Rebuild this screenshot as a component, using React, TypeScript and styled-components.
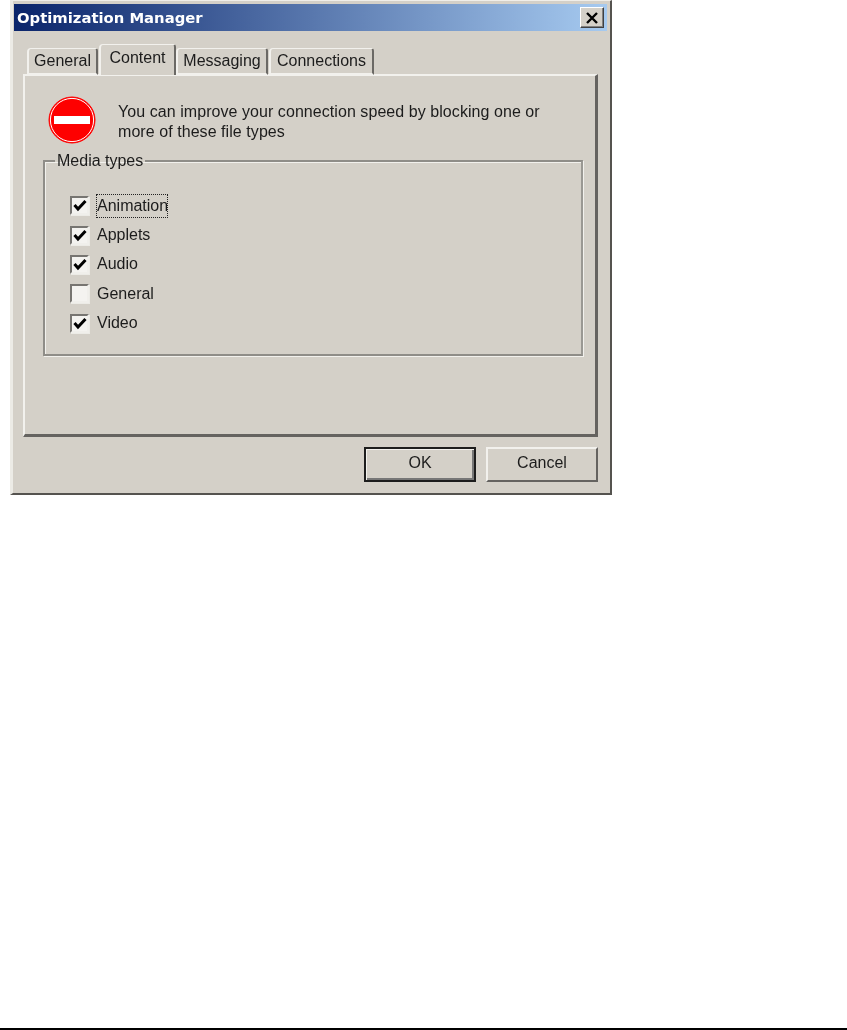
import React from "react";
import styled, { createGlobalStyle } from "styled-components";

const Global = createGlobalStyle`
  html, body { margin: 0; padding: 0; background: #fff; }
  #root { height: 1030px; }
`;

const Page = styled.div`
  height: 1030px;
  display: flex;
  flex-direction: column;
  justify-content: space-between;
  align-items: flex-start;
  overflow: hidden;
`;

const Win = styled.div`
  box-sizing: border-box;
  width: 602px;
  height: 495px;
  margin-left: 10px;
  padding: 3px 3px 5px 1px;
  background: #d4d0c8;
  border-top: 1px solid #f0eee9;
  border-left: 3px solid #ecebe6;
  border-right: 2px solid #55534f;
  border-bottom: 2px solid #55534f;
  display: flex;
  flex-direction: column;
  font-family: "Liberation Sans", Arial, sans-serif;
  font-size: 16px;
  color: #1c1c1c;
  filter: blur(0.45px);
`;

const TitleBar = styled.div`
  height: 27px;
  flex: none;
  display: flex;
  align-items: center;
  justify-content: space-between;
  padding: 0 3px 0 3px;
  background: linear-gradient(90deg, #0a246a, #a6caf0);
`;

const TitleText = styled.span`
  font-family: "DejaVu Sans", Verdana, sans-serif;
  font-weight: 700;
  font-size: 14.8px;
  color: #fff;
`;

const CloseBtn = styled.div`
  box-sizing: border-box;
  width: 24px;
  height: 21px;
  display: flex;
  align-items: center;
  justify-content: center;
  background: #d4d0c8;
  border: 1px solid;
  border-color: #fff #404040 #404040 #fff;
  box-shadow: inset -1px -1px 0 #808080;
`;

const Body = styled.div`
  flex: 1;
  display: flex;
  flex-direction: column;
  padding: 0 9px 0 9px;
`;

const Tabs = styled.div`
  height: 44px;
  flex: none;
  display: flex;
  align-items: flex-end;
  padding-left: 4px;
  position: relative;
  z-index: 1;
  margin-bottom: -1px;
`;

const Tab = styled.div<{ $active?: boolean; $w: number; $gap: number }>`
  box-sizing: border-box;
  width: ${(p) => p.$w}px;
  height: ${(p) => (p.$active ? 31 : 27)}px;
  margin-right: ${(p) => p.$gap}px;
  padding-bottom: ${(p) => (p.$active ? 4 : 0)}px;
  display: flex;
  align-items: center;
  justify-content: center;
  background: #d4d0c8;
  border-top: 1px solid #f2f1ed;
  border-left: 2px solid #f2f1ed;
  border-right: 2px solid #6b6965;
  border-top-left-radius: 4px;
  border-top-right-radius: 3px;
  ${(p) => (p.$active ? "" : "border-bottom: 2px solid #f2f1ed;")}
`;

const Panel = styled.div`
  box-sizing: border-box;
  height: 363px;
  flex: none;
  padding: 20px 15px 0 18px;
  background: #d4d0c8;
  border-top: 2px solid #f2f1ed;
  border-left: 2px solid #f2f1ed;
  border-right: 3px solid #656360;
  border-bottom: 3px solid #656360;
`;

const Notice = styled.div`
  display: flex;
  align-items: flex-start;
  height: 56px;
  padding-left: 5px;
`;

const NoticeText = styled.div`
  margin: 6px 0 0 22px;
  line-height: 19.5px;
  letter-spacing: 0.06px;
  white-space: nowrap;
`;

const Group = styled.fieldset`
  box-sizing: border-box;
  margin: 0;
  padding: 0 0 0 25px;
  height: 204px;
  width: 540px;
  border: 2px solid #8f8d88;
  border-right-color: #9a9893;
  box-shadow: 1px 1px 0 #f2f1ed, inset 1px 1px 0 #f2f1ed;
  border-radius: 0;
`;

const Legend = styled.legend`
  padding: 0 2px;
  margin-left: -15px;
  line-height: 18px;
`;

const Rows = styled.div`
  display: flex;
  flex-direction: column;
  padding-top: 21px;
`;

const Row = styled.div`
  height: 29.4px;
  display: flex;
  align-items: center;
`;

const Box = styled.span`
  box-sizing: border-box;
  width: 19px;
  height: 19px;
  flex: none;
  display: flex;
  align-items: center;
  justify-content: center;
  background: #f4f3f0;
  border: 2px solid;
  border-color: #777571 #f0efeb #f0efeb #777571;
  box-shadow: 1px 1px 0 #ecebe6;
`;

const Label = styled.span<{ $focus?: boolean }>`
  margin-left: 8px;
  ${(p) =>
    p.$focus
      ? `outline: 1.5px dotted #222; width: 70px; height: 22px; line-height: 21px; overflow: hidden; white-space: nowrap;`
      : ""}
`;

const Footer = styled.div`
  flex: 1;
  display: flex;
  justify-content: flex-end;
  align-items: flex-start;
  gap: 10px;
  padding-top: 10px;
`;

const Btn = styled.div<{ $def?: boolean }>`
  box-sizing: border-box;
  width: 112px;
  height: 35px;
  padding-bottom: 3px;
  display: flex;
  align-items: center;
  justify-content: center;
  background: #d4d0c8;
  ${(p) =>
    p.$def
      ? `border: 2px solid #1d1d1d; box-shadow: inset 1px 1px 0 #f2f1ed, inset -2px -2px 0 #777;`
      : `border: 2px solid; border-color: #f2f1ed #656360 #656360 #f2f1ed;`}
`;

const Rule = styled.div`
  width: 100%;
  height: 2px;
  flex: none;
  background: #000;
`;

const Check = () => (
  <svg width="14" height="13" viewBox="0 0 14 13">
    <path d="M1.5 6 L5 10 L12.5 2" fill="none" stroke="#000" strokeWidth="3" />
  </svg>
);

const media = [
  { name: "Animation", on: true, focus: true },
  { name: "Applets", on: true },
  { name: "Audio", on: true },
  { name: "General", on: false },
  { name: "Video", on: true },
];

export default function App() {
  return (
    <Page>
      <Global />
      <Win>
        <TitleBar>
          <TitleText>Optimization Manager</TitleText>
          <CloseBtn>
            <svg width="14" height="12" viewBox="0 0 14 12">
              <path d="M2 1 L12 11 M12 1 L2 11" stroke="#000" strokeWidth="2.4" />
            </svg>
          </CloseBtn>
        </TitleBar>
        <Body>
          <Tabs>
            <Tab $w={71} $gap={1}>General</Tab>
            <Tab $w={77} $gap={0} $active>Content</Tab>
            <Tab $w={92} $gap={1}>Messaging</Tab>
            <Tab $w={105} $gap={0}>Connections</Tab>
          </Tabs>
          <Panel>
            <Notice>
              <svg width="48" height="48" viewBox="0 0 48 48" style={{ flex: "none" }}>
                <circle cx="24" cy="24" r="23" fill="#fe0000" stroke="#ff0000" strokeWidth="1" />
                <circle cx="24" cy="24" r="21.6" fill="none" stroke="#fff" strokeWidth="1" />
                <rect x="6" y="20" width="36" height="8" fill="#fff" />
              </svg>
              <NoticeText>
                You can improve your connection speed by blocking one or
                <br />
                more of these file types
              </NoticeText>
            </Notice>
            <Group>
              <Legend>Media types</Legend>
              <Rows>
                {media.map((m) => (
                  <Row key={m.name}>
                    <Box>{m.on && <Check />}</Box>
                    <Label $focus={m.focus}>{m.name}</Label>
                  </Row>
                ))}
              </Rows>
            </Group>
          </Panel>
          <Footer>
            <Btn $def>OK</Btn>
            <Btn>Cancel</Btn>
          </Footer>
        </Body>
      </Win>
      <Rule />
    </Page>
  );
}
